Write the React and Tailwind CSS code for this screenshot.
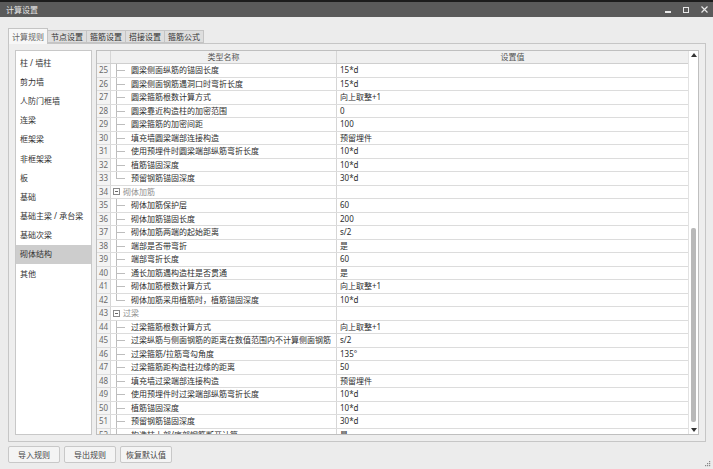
import React from "react";

const FONT = { fontFamily: '"Noto Sans", "Noto Sans CJK SC", sans-serif' };

const rows = [
  [25, "圆梁侧面纵筋的锚固长度", "15*d", "c"],
  [26, "圆梁侧面钢筋遇洞口时弯折长度", "15*d", "c"],
  [27, "圆梁箍筋根数计算方式", "向上取整+1", "c"],
  [28, "圆梁靠近构造柱的加密范围", "0", "c"],
  [29, "圆梁箍筋的加密间距", "100", "c"],
  [30, "填充墙圆梁端部连接构造", "预留埋件", "c"],
  [31, "使用预埋件时圆梁端部纵筋弯折长度", "10*d", "c"],
  [32, "植筋锚固深度", "10*d", "c"],
  [33, "预留钢筋锚固深度", "30*d", "l"],
  [34, "砌体加筋", "", "g"],
  [35, "砌体加筋保护层", "60", "c"],
  [36, "砌体加筋锚固长度", "200", "c"],
  [37, "砌体加筋两端的起始距离", "s/2", "c"],
  [38, "端部是否带弯折", "是", "c"],
  [39, "端部弯折长度", "60", "c"],
  [40, "通长加筋遇构造柱是否贯通", "是", "c"],
  [41, "砌体加筋根数计算方式", "向上取整+1", "c"],
  [42, "砌体加筋采用植筋时，植筋锚固深度", "10*d", "l"],
  [43, "过梁", "", "g"],
  [44, "过梁箍筋根数计算方式", "向上取整+1", "c"],
  [45, "过梁纵筋与侧面钢筋的距离在数值范围内不计算侧面钢筋", "s/2", "c"],
  [46, "过梁箍筋/拉筋弯勾角度", "135°", "c"],
  [47, "过梁箍筋距构造柱边缘的距离", "50", "c"],
  [48, "填充墙过梁端部连接构造", "预留埋件", "c"],
  [49, "使用预埋件时过梁端部纵筋弯折长度", "10*d", "c"],
  [50, "植筋锚固深度", "10*d", "c"],
  [51, "预留钢筋锚固深度", "30*d", "c"],
  [52, "构造柱上部/底部钢筋断开计算", "是", "c"],
];

const sideItems = [
  "柱 / 墙柱",
  "剪力墙",
  "人防门框墙",
  "连梁",
  "框架梁",
  "非框架梁",
  "板",
  "基础",
  "基础主梁 / 承台梁",
  "基础次梁",
  "砌体结构",
  "其他",
];

const tabs = ["节点设置", "箍筋设置", "搭接设置", "箍筋公式"];

function Tree({ kind }) {
  return (
    <div className="relative w-[20px] self-stretch shrink-0">
      <div
        className={
          kind === "l"
            ? "absolute left-[5px] top-0 h-1/2 w-px bg-[#bdbdbd]"
            : "absolute left-[5px] top-0 bottom-0 w-px bg-[#bdbdbd]"
        }
      />
      <div className="absolute left-[5px] top-1/2 w-[9px] h-px bg-[#bdbdbd]" />
    </div>
  );
}

function Row({ r }) {
  const [n, name, value, kind] = r;
  return (
    <div className="flex h-[13.5px] shrink-0 border-b border-[#dcdcdc] text-[8px] leading-none">
      <div className="w-[14px] shrink-0 flex items-center pl-[2px] bg-[#f4f4f4] border-r border-[#d6d6d6] text-[#6a6a6a]">
        {n}
      </div>
      <div className="w-[226px] shrink-0 flex items-center border-r border-[#d6d6d6] overflow-hidden whitespace-nowrap">
        {kind === "g" ? (
          <>
            <div className="ml-[2px] w-[7px] h-[7px] border border-[#8a8a8a] flex items-center justify-center bg-white">
              <div className="w-[3px] h-px bg-[#666]" />
            </div>
            <span className="ml-[3px] text-[#8f8f8f]">{name}</span>
          </>
        ) : (
          <>
            <Tree kind={kind} />
            <span className="text-[#2e2e2e]">{name}</span>
          </>
        )}
      </div>
      <div className="flex-1 flex items-center pl-[3px] text-[#2e2e2e] whitespace-nowrap">
        {value}
      </div>
    </div>
  );
}

export default function App() {
  return (
    <div
      className="w-[713px] h-[469px] bg-[#ececec] relative overflow-hidden flex flex-col"
      style={FONT}
    >
      <div className="h-[2px] bg-[#1c1c1c] shrink-0" />
      <div className="h-[15px] shrink-0 bg-[#5a5a5a] flex items-center pl-[6px] pr-[5px]">
        <span className="text-[8px] text-[#e6e6e6] leading-none">计算设置</span>
        <div className="ml-auto flex items-center gap-[12px]">
          <div className="w-[6px] h-[6px] flex items-end">
            <div className="w-[6px] h-[1.5px] bg-[#e8e8e8]" />
          </div>
          <div className="w-[6px] h-[6px] border border-[#e8e8e8] border-t-[1.5px]" />
          <svg width="7" height="7" viewBox="0 0 7 7">
            <path d="M0.5 0.5 L6.5 6.5 M6.5 0.5 L0.5 6.5" stroke="#e8e8e8" strokeWidth="1.2" />
          </svg>
        </div>
      </div>

      <div className="mt-[11px] ml-[8px] flex items-end h-[15px] shrink-0 relative z-10 text-[8px] leading-none">
        <div className="h-[16px] w-[40px] -mb-px bg-[#f7f7f7] border border-b-0 border-[#c4c4c4] flex items-center justify-center text-[#666]">
          计算规则
        </div>
        {tabs.map((t) => (
          <div
            key={t}
            className="h-[13px] w-[39px] bg-[#dedede] border border-l-0 border-[#c4c4c4] flex items-center justify-center text-[#333]"
          >
            {t}
          </div>
        ))}
      </div>

      <div className="mx-[8px] mr-[7px] h-[399px] shrink-0 border border-[#c6c6c6] bg-[#eeeeee] p-[6px] flex gap-[4px]">
        <div className="w-[77px] shrink-0 bg-white border border-[#c8c8c8] pt-[2px] flex flex-col">
          {sideItems.map((s) => (
            <div
              key={s}
              className={
                "h-[19.2px] flex items-center pl-[4px] text-[8px] leading-none whitespace-nowrap " +
                (s === "砌体结构" ? "bg-[#cdcdcd] text-[#333]" : "text-[#333]")
              }
            >
              {s}
            </div>
          ))}
        </div>

        <div className="flex-1 bg-white border border-[#bfbfbf] flex overflow-hidden">
          <div className="flex-1 flex flex-col overflow-hidden">
            <div className="flex h-[13px] shrink-0 border-b border-[#cfcfcf] bg-[#f0f0f0] text-[8px] leading-none text-[#555]">
              <div className="w-[14px] shrink-0 border-r border-[#d6d6d6]" />
              <div className="w-[226px] shrink-0 border-r border-[#d6d6d6] flex items-center justify-center">
                类型名称
              </div>
              <div className="flex-1 flex items-center justify-center">设置值</div>
            </div>
            {rows.map((r) => (
              <Row key={r[0]} r={r} />
            ))}
          </div>
          <div className="w-[10px] shrink-0 border-l border-[#e2e2e2] flex flex-col items-center">
            <div className="h-[8px] flex items-center justify-center">
              <svg width="6" height="4" viewBox="0 0 6 4">
                <path d="M0 4 L3 0 L6 4 Z" fill="#333" />
              </svg>
            </div>
            <div className="h-[169px]" />
            <div className="w-[5px] h-[194px] bg-[#b9b9b9] rounded-[2px]" />
            <div className="flex-1" />
            <div className="h-[8px] flex items-center justify-center">
              <svg width="6" height="4" viewBox="0 0 6 4">
                <path d="M0 0 L6 0 L3 4 Z" fill="#333" />
              </svg>
            </div>
          </div>
        </div>
      </div>

      <div className="mt-[4px] ml-[8px] flex gap-[4px] shrink-0">
        {["导入规则", "导出规则", "恢复默认值"].map((b) => (
          <div
            key={b}
            className="w-[52px] h-[17px] bg-[#f4f4f4] border border-[#c8c8c8] rounded-[2px] flex items-center justify-center text-[8px] leading-none text-[#444]"
          >
            {b}
          </div>
        ))}
      </div>

      <svg className="absolute right-[2px] bottom-[2px]" width="6" height="6" viewBox="0 0 6 6">
        <rect x="4" y="0" width="1.2" height="1.2" fill="#888" />
        <rect x="2" y="2" width="1.2" height="1.2" fill="#888" />
        <rect x="4" y="2" width="1.2" height="1.2" fill="#888" />
        <rect x="0" y="4" width="1.2" height="1.2" fill="#888" />
        <rect x="2" y="4" width="1.2" height="1.2" fill="#888" />
        <rect x="4" y="4" width="1.2" height="1.2" fill="#888" />
      </svg>
    </div>
  );
}
